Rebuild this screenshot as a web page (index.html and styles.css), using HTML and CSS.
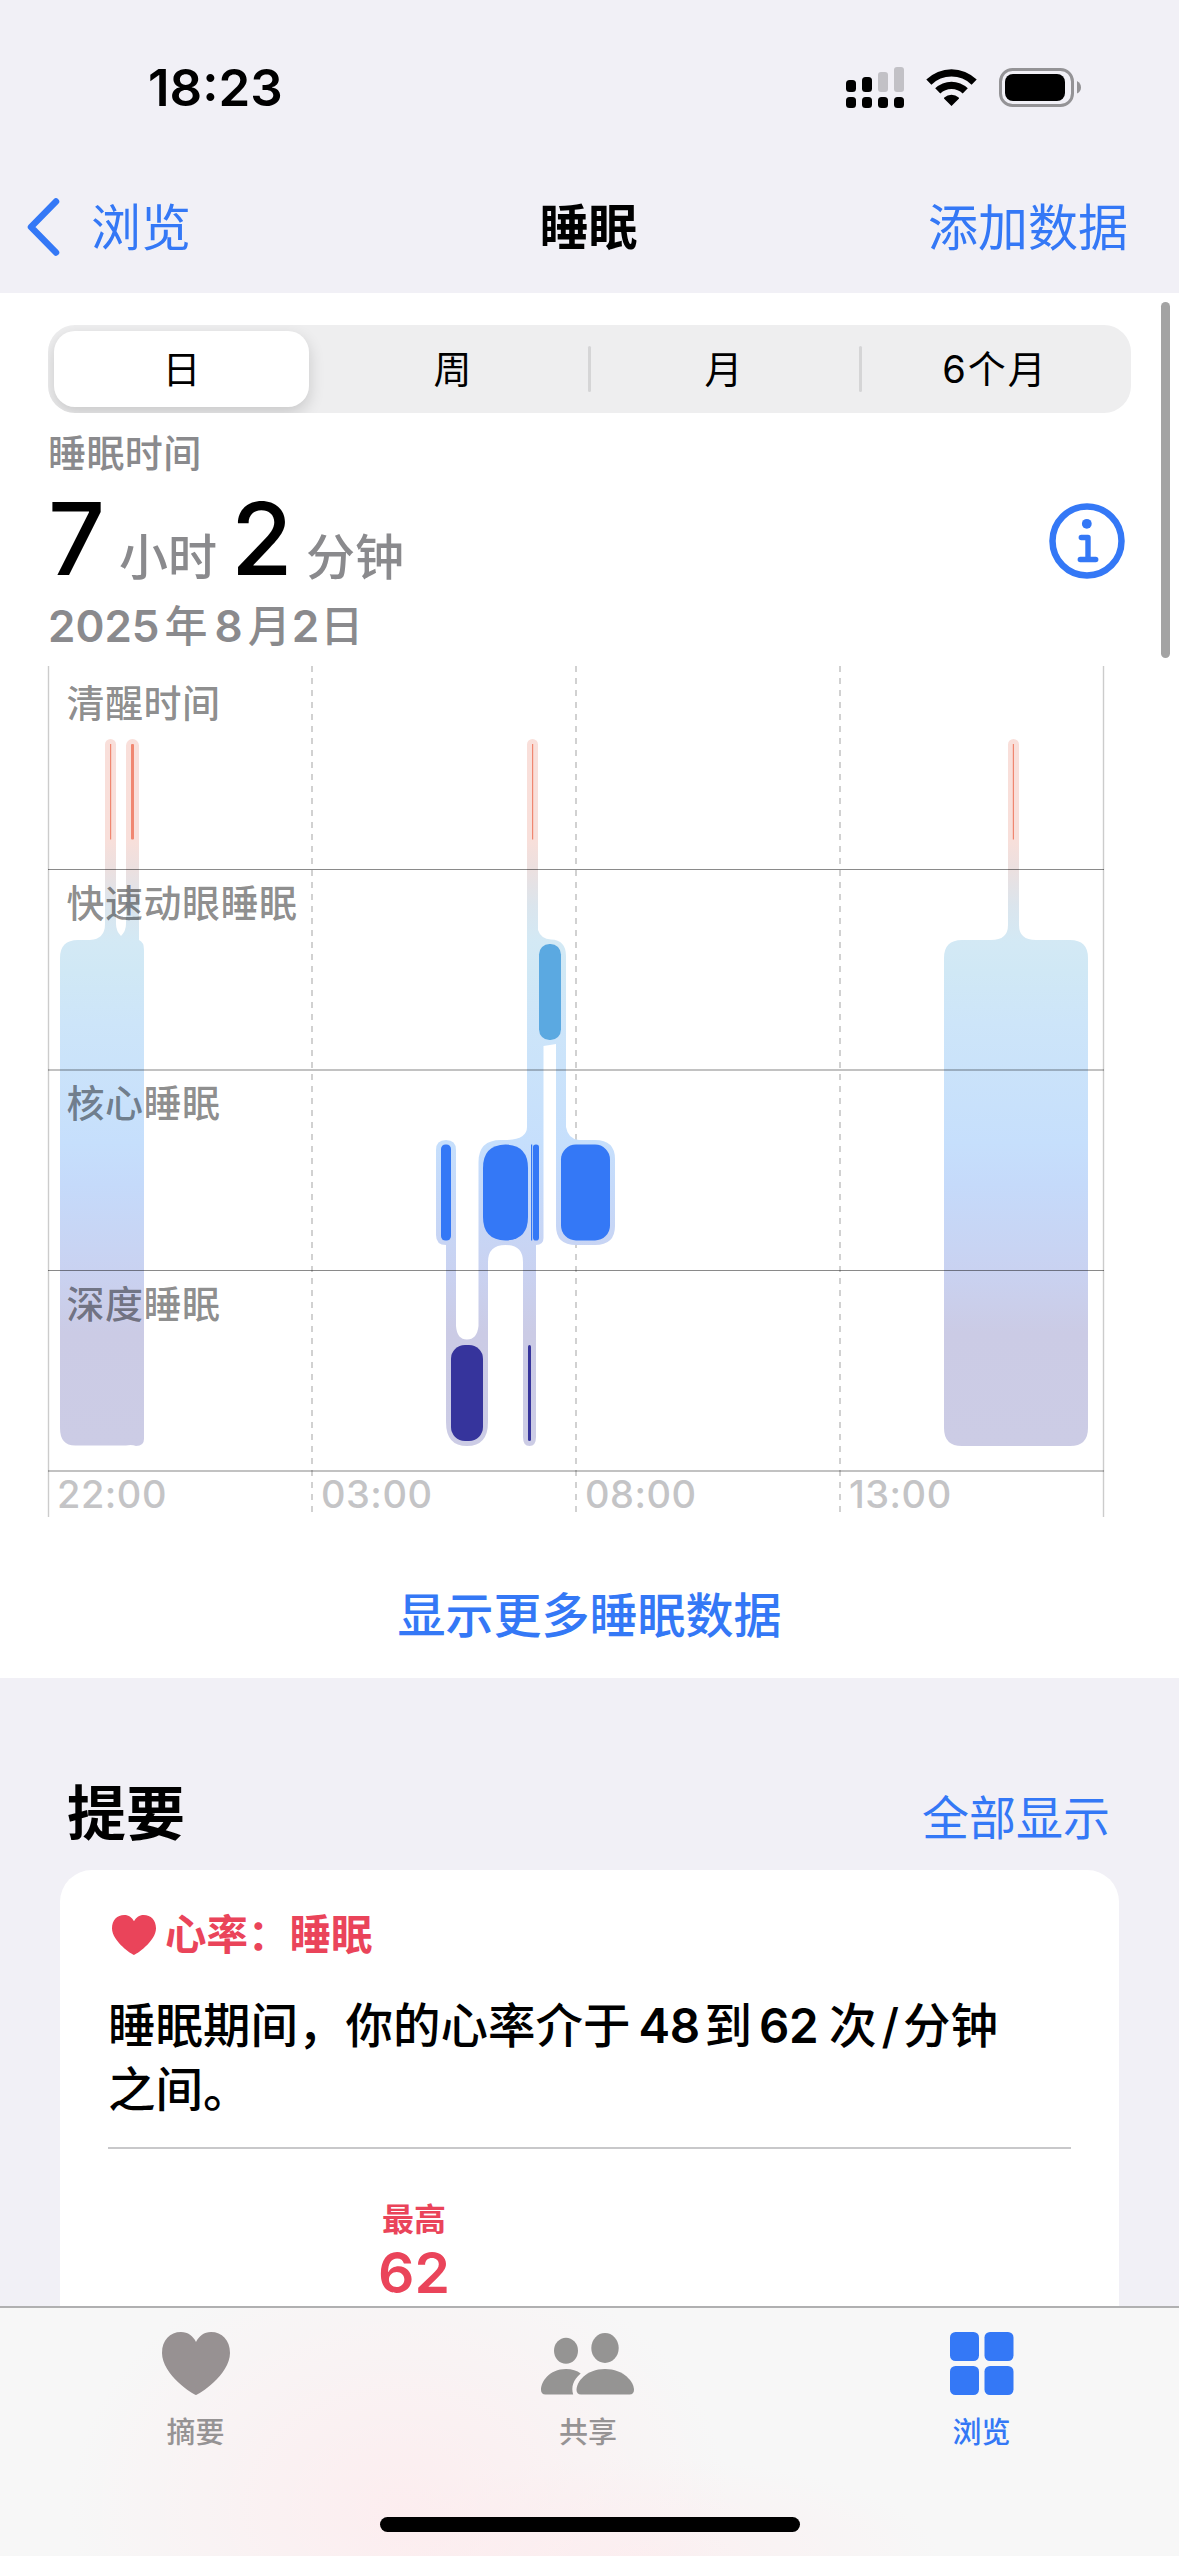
FILE: index.html
```html
<!DOCTYPE html>
<html lang="zh-CN">
<head>
<meta charset="utf-8">
<title>睡眠</title>
<link rel="stylesheet" href="styles.css">
</head>
<body>
<div class="screen">
  <header class="top">
    <div class="status">
      <span class="clock">18:23</span>
      <svg class="status-icons" width="240" height="44" viewBox="844 66 240 44">
        <g fill="#000">
          <rect x="846" y="80" width="10" height="12" rx="3.5"/>
          <rect x="862" y="77" width="10" height="15" rx="3.5"/>
          <rect x="846" y="97" width="10" height="11" rx="3.5"/>
          <rect x="862" y="97" width="10" height="11" rx="3.5"/>
          <rect x="878" y="97" width="10" height="11" rx="3.5"/>
          <rect x="894" y="97" width="10" height="11" rx="3.5"/>
        </g>
        <g fill="#c2c1c6">
          <rect x="878" y="72" width="10" height="20" rx="3"/>
          <rect x="894" y="67" width="10" height="25" rx="3"/>
        </g>
        <path d="M951.5 106 L944.2 98.7 Q943.6 98 944.3 97.4 A11 11 0 0 1 958.700 97.400 Q959.400 98 958.800 98.700 Z"/>
        <path d="M935.200 88.300 A23.500 23.500 0 0 1 967.800 88.300 L962.700 93.600 A16 16 0 0 0 940.300 93.600 Z"/>
        <path d="M926.300 79.500 A36 36 0 0 1 976.700 79.500 L971.600 84.700 A28.500 28.500 0 0 0 931.400 84.700 Z"/>
        <rect x="1000.500" y="69.500" width="72" height="36" rx="12" fill="none" stroke="#949396" stroke-width="3"/>
        <rect x="1005" y="74" width="60" height="27" rx="8"/>
        <path d="M1077 81 Q1081 83 1081 87.500 Q1081 91.500 1077 93.500 Z" fill="#949396"/>
      </svg>
    </div>
    <nav class="nav">
      <a class="back">
        <svg width="36" height="62" viewBox="0 0 36 62"><path d="M31 5.500 L6 31 L31 56.500" fill="none" stroke="#3478f6" stroke-width="6.500" stroke-linecap="round" stroke-linejoin="round"/></svg>
        <span>浏览</span>
      </a>
      <h1 class="nav-title">睡眠</h1>
      <a class="nav-action">添加数据</a>
    </nav>
  </header>

  <main class="panel">
    <div class="segments">
      <span class="segment selected">日</span>
      <span class="segment">周</span>
      <span class="segment divided">月</span>
      <span class="segment divided half-year">6个月</span>
    </div>
    <div class="summary">
      <div class="summary-text">
        <p class="metric">睡眠时间</p>
        <p class="duration"><b>7</b><span>小时</span><b>2</b><span>分钟</span></p>
        <p class="date"><span>2025</span><span class="han year">年</span><span>8</span><span class="han month">月</span><span>2</span><span class="han day">日</span></p>
      </div>
      <svg class="info" width="76" height="76" viewBox="0 0 76 76" fill="none" stroke="#3478f6" stroke-linecap="round" stroke-linejoin="round">
        <circle cx="38" cy="38" r="34.500" stroke-width="6.500"/>
        <circle cx="37.800" cy="20.800" r="4.900" fill="#3478f6" stroke="none"/>
        <path d="M32.300 34.500 H39 V56 M31.300 56.500 H46.700" stroke-width="5.400"/>
      </svg>
    </div>

    <svg class="chart" width="1179" height="852" viewBox="0 666 1179 852">
      <defs>
        <linearGradient id="stage" gradientUnits="userSpaceOnUse" x1="0" y1="740" x2="0" y2="1446">
          <stop offset="0" stop-color="#f9dfda"/>
          <stop offset=".142" stop-color="#f8dfda"/>
          <stop offset=".185" stop-color="#ebe0e0"/>
          <stop offset=".235" stop-color="#dbe5ed"/>
          <stop offset=".285" stop-color="#d3e9f5"/>
          <stop offset=".33" stop-color="#d0e8f5"/>
          <stop offset=".4" stop-color="#cde5f9"/>
          <stop offset=".57" stop-color="#c6dffc"/>
          <stop offset=".63" stop-color="#c5dafa"/>
          <stop offset=".75" stop-color="#c9d2f1"/>
          <stop offset=".84" stop-color="#cbcbe5"/>
          <stop offset="1" stop-color="#cccce5"/>
        </linearGradient>
      </defs>
      <path d="M312 666 V1517 M576 666 V1517 M840 666 V1517" stroke="#000" stroke-opacity=".18" stroke-width="2" stroke-dasharray="6 6"/>
      <path d="M48.500 666 V1517 M1103.500 666 V1517" stroke="#000" stroke-opacity=".2" stroke-width="1.400"/>
      <g fill="url(#stage)">
        <path d="M105 744.500 a5.500 5.500 0 0 1 11 0 V924 Q116 931 121 936 Q126 931 126 924 V745.500 a6.500 6.500 0 0 1 13 0 V940 Q144 942 144 950 V1439 Q144 1446 136 1446 Q132 1444.500 126 1445.500 H76 Q60 1446 60 1428 V958 Q60 940 78 940 H90 Q105 939 105 924 Z"/>
        <path d="M1008 744.500 a5.500 5.500 0 0 1 11 0 V925 Q1019 940 1036 940 H1070 Q1088 940 1088 958 V1428 Q1088 1446 1070 1446 H962 Q944 1446 944 1428 V958 Q944 940 962 940 H991 Q1008 940 1008 925 Z"/>
        <path d="M527 744.500 a5.500 5.500 0 0 1 11 0 V930 Q541 939 551 939.500 Q566 940 566 956 V1127 Q568 1139 579 1140 H595 Q615 1140 615 1159 V1226 Q615 1245 595 1245 H576 Q556 1245 556 1226 V1044 Q550 1045 543.500 1046 V1238 Q543.500 1245 536 1245 V1437 Q536 1446 529.500 1446 Q523 1446 523 1437 V1262 Q523 1245 505.500 1245 Q488 1245 488 1262 V1422 Q488 1446 467 1446 Q446 1446 446 1422 V1245 Q436 1245 436 1235 V1150 Q436 1140 446 1140 Q456 1140 456 1150 V1326 Q457 1339.500 467 1339.500 Q477 1339.500 478.500 1326 V1162 Q478.500 1140 501 1140 Q527 1141 527 1127 Z"/>
      </g>
      <g fill="#f08670">
        <rect x="110" y="744" width="1.200" height="95.500"/>
        <rect x="131" y="744" width="3" height="95.500" rx="1"/>
        <rect x="532" y="744" width="1.200" height="95.500"/>
        <rect x="1012.800" y="744" width="1.200" height="95.500"/>
      </g>
      <rect x="539" y="944" width="22" height="96" rx="10.500" fill="#5ba9e1"/>
      <g fill="#3478f6">
        <rect x="441" y="1144.500" width="10" height="96" rx="4.500"/>
        <path d="M505.500 1144.500 Q528 1145 528 1168 V1217 Q528 1240 505.500 1240.500 Q483 1240 483 1217 V1168 Q483 1145 505.500 1144.500"/>
        <rect x="531" y="1144.500" width="1.200" height="96"/>
        <rect x="533" y="1144.500" width="6" height="96" rx="2.800"/>
        <rect x="561" y="1144.500" width="49" height="96" rx="15"/>
      </g>
      <g fill="#36349c">
        <rect x="451" y="1345" width="32" height="96" rx="14"/>
        <rect x="528" y="1345" width="3" height="96" rx="1.500"/>
      </g>
      <path d="M48 869.500 H1104 M48 1270.500 H1104" stroke="#000" stroke-opacity=".46" stroke-width="1"/>
      <path d="M48 1070 H1104 M48 1471 H1104" stroke="#000" stroke-opacity=".24" stroke-width="2"/>
      <g class="stage-label">
        <text x="66.500" y="716.500">清醒时间</text>
        <text x="66.500" y="916.500">快速动眼睡眠</text>
        <text x="66.500" y="1117">核心睡眠</text>
        <text x="66.500" y="1317.500">深度睡眠</text>
      </g>
      <g class="hour-label">
        <text x="57" y="1508">22:00</text>
        <text x="321" y="1508">03:00</text>
        <text x="585" y="1508">08:00</text>
        <text x="849" y="1508">13:00</text>
      </g>
    </svg>
    <a class="more">显示更多睡眠数据</a>
  </main>

  <section class="highlights">
    <div class="section-head">
      <h2>提要</h2>
      <a>全部显示</a>
    </div>
    <article class="card">
      <div class="card-topic">
        <svg width="44" height="40" viewBox="0 0 68 63" preserveAspectRatio="none"><path d="M34 63 C32 63 0 42 0 21 C0 8 8 0 19 0 C26 0 31 4 34 10 C37 4 42 0 49 0 C60 0 68 8 68 21 C68 42 36 63 34 63 Z" fill="#ea445a"/></svg>
        <span>心率：睡眠</span>
      </div>
      <p class="card-text">睡眠期间，你的心率介于<span class="low">48</span>到<span class="high">62</span>次<span class="slash">/</span>分钟<br>之间。</p>
      <div class="card-stat">
        <span class="stat-name">最高</span>
        <span class="stat-value">62</span>
      </div>
    </article>
  </section>

  <footer class="tabbar">
    <div class="tabs">
      <a class="tab">
        <svg width="68" height="64" viewBox="0 0 68 64"><path d="M34 63 C32 63 0 43 0 21 C0 8 8 0 19 0 C26 0 31 4 34 10 C37 4 42 0 49 0 C60 0 68 8 68 21 C68 43 36 63 34 63 Z" fill="#979192"/></svg>
        <span>摘要</span>
      </a>
      <a class="tab">
        <svg width="94" height="64" viewBox="542 2331 94 64" fill="#959493">
          <ellipse cx="567" cy="2349.800" rx="12" ry="13"/>
          <ellipse cx="606" cy="2347" rx="13.700" ry="15"/>
          <path d="M582 2393.500 C579 2393.500 577.500 2391.500 577.500 2389 C577.500 2381 587 2368 606 2368 C625 2368 635 2381 635 2389 C635 2391.500 633.500 2393.500 630.500 2393.500 Z"/>
          <path d="M546.500 2393.500 C543.500 2393.500 542 2391.500 542 2389 C542 2381 550 2368 567 2368 C573 2368 578 2369.500 581.700 2372.500 C574 2379 572 2386 574.200 2393.500 Z"/>
        </svg>
        <span>共享</span>
      </a>
      <a class="tab active">
        <svg width="64" height="64" viewBox="0 0 64 64" fill="#3478f6">
          <rect x="0" y="0" width="29" height="29" rx="5.500"/>
          <rect x="34.500" y="0" width="29" height="29" rx="5.500"/>
          <rect x="0" y="34" width="29" height="29" rx="5.500"/>
          <rect x="34.500" y="34" width="29" height="29" rx="5.500"/>
        </svg>
        <span>浏览</span>
      </a>
    </div>
    <div class="home"></div>
  </footer>
  <div class="scrollbar"></div>
</div>
</body>
</html>
```
FILE: styles.css
```css
* { box-sizing: border-box; margin: 0; padding: 0; }

body {
  font-family: Inter, "Noto Sans CJK SC", sans-serif;
  background: #f1f0f6;
  color: #000;
}

svg { display: block; flex: none; }

.screen {
  position: relative;
  width: 1179px;
  height: 2556px;
  overflow: hidden;
  background: #f1f0f6;
}

.status {
  display: flex;
  align-items: center;
  justify-content: space-between;
  height: 160px;
  padding: 16px 95px 0 148px;
}

.clock { font-size: 51px; font-weight: 600; line-height: 60px; letter-spacing: 0; }

.nav {
  display: grid;
  grid-template-columns: 1fr auto 1fr;
  align-items: center;
  height: 133px;
  padding: 0 51px 0 25px;
  font-size: 50px;
  line-height: 60px;
  color: #3478f6;
}

.back { display: flex; align-items: center; gap: 30px; }
.back span, .nav-action { padding-top: 3px; }
.nav-title { font-size: 49px; font-weight: 600; color: #000; padding: 3px 0 0 24px; }
.nav-action { justify-self: end; }

.panel {
  height: 1385px;
  padding-top: 32px;
  background: #fff;
}

.segments {
  display: grid;
  grid-template-columns: 269px 271px 271px 272px;
  width: 1083px;
  height: 88px;
  margin-left: 48px;
  border-radius: 27px;
  background: #eeeeef;
  overflow: hidden;
}

.segment {
  display: flex;
  align-items: center;
  justify-content: center;
  font-size: 38px;
  font-weight: 400;
  line-height: 46px;
}

.selected {
  margin: 6px 8px 6px 6px;
  border-radius: 21px;
  background: #fff;
  box-shadow: 0 6px 16px rgba(0, 0, 0, .16);
}

.divided::before {
  content: "";
  width: 3px;
  height: 46px;
  margin-right: auto;
  border-radius: 2px;
  background: #d5d5d6;
}

.divided::after { content: ""; width: 3px; margin-left: auto; }
.half-year { letter-spacing: 2px; }

.summary {
  display: flex;
  justify-content: space-between;
  align-items: flex-start;
  height: 253px;
  padding: 0 54px 0 48px;
}

.info { align-self: center; margin-top: 3px; }

.metric {
  height: 40px;
  margin-top: 20px;
  font-size: 38px;
  font-weight: 500;
  line-height: 40px;
  letter-spacing: .4px;
  color: #8a8a8d;
}

.duration {
  display: flex;
  align-items: baseline;
  height: 110px;
  line-height: 110px;
  margin-top: 11px;
  font-size: 49px;
  color: #8a8a8d;
}

.duration b { width: 71px; font-size: 100px; font-weight: 500; color: #000; }
.duration span { width: 112px; font-weight: 500; }
.duration span:nth-of-type(2) { margin-left: 4px; }

.date {
  display: flex;
  height: 50px;
  margin-top: 7px;
  font-size: 44px;
  font-weight: 600;
  line-height: 50px;
  color: #8a8a8d;
}

.date .han { font-size: 43px; font-weight: 500; }
.date .year { margin: 0 7px 0 5px; }
.date .month { margin: 0 1px 0 5px; }
.date .day { margin-left: 1px; }

.stage-label { font-size: 38px; font-weight: 500; letter-spacing: .5px; fill: #000; fill-opacity: .46; }
.hour-label { font-size: 38px; font-weight: 500; letter-spacing: .5px; fill: #c4c4c6; }

.more {
  display: block;
  height: 60px;
  margin-top: 68px;
  font-size: 48px;
  font-weight: 500;
  line-height: 60px;
  text-align: center;
  color: #3478f6;
}

.highlights { padding: 96px 60px 0; }

.section-head {
  display: flex;
  align-items: center;
  justify-content: space-between;
  height: 96px;
  padding: 0 9px 0 7px;
}

.section-head h2 { font-size: 59px; font-weight: 700; line-height: 80px; margin-top: -16px; }
.section-head a { font-size: 47px; line-height: 60px; margin-top: -8px; color: #3478f6; }

.card {
  height: 760px;
  padding: 0 48px;
  border-radius: 32px;
  background: #fff;
}

.card-topic {
  display: flex;
  align-items: center;
  gap: 9px;
  padding: 41px 0 0 4px;
  font-size: 41.5px;
  font-weight: 600;
  line-height: 48px;
  color: #ea445a;
}

.card-text {
  height: 190px;
  padding-top: 35px;
  font-size: 47.5px;
  font-weight: 500;
  line-height: 64px;
  border-bottom: 2px solid #c8c8ca;
}

.low, .high { font-weight: 600; letter-spacing: -.5px; }
.low { margin: 0 5px 0 8px; }
.high { margin: 0 11px 0 7px; }
.slash { margin: 0 4px 0 5px; }

.card-stat {
  display: flex;
  flex-direction: column;
  align-items: center;
  width: 128px;
  margin: 49px 0 0 242px;
  color: #ea445a;
}

.stat-name { font-size: 32px; font-weight: 700; line-height: 44px; }
.stat-value { margin-top: -1px; font-size: 57px; font-weight: 600; line-height: 64px; }

.tabbar {
  position: absolute;
  left: 0;
  bottom: 0;
  width: 1179px;
  height: 250px;
  border-top: 2px solid #b0b0b1;
  background:
    radial-gradient(ellipse 330px 260px at 400px 200px, rgba(255, 232, 235, .65), rgba(255, 232, 235, 0)),
    radial-gradient(ellipse 300px 100px at 640px 250px, rgba(255, 232, 235, .5), rgba(255, 232, 235, 0)),
    #f7f7f7;
}

.tabs { display: grid; grid-template-columns: 391px 394px 393px; height: 209px; padding-top: 24px; }

.tab {
  display: flex;
  flex-direction: column;
  align-items: center;
  font-size: 29px;
  font-weight: 500;
  line-height: 36px;
  gap: 19px;
  color: #969394;
}

.active { color: #3478f6; }

.home { width: 420px; height: 15px; margin: 0 auto; border-radius: 8px; background: #000; }

.scrollbar {
  position: absolute;
  left: 1161px;
  top: 302px;
  width: 9px;
  height: 356px;
  border-radius: 5px;
  background: #a3a3a3;
}
```
